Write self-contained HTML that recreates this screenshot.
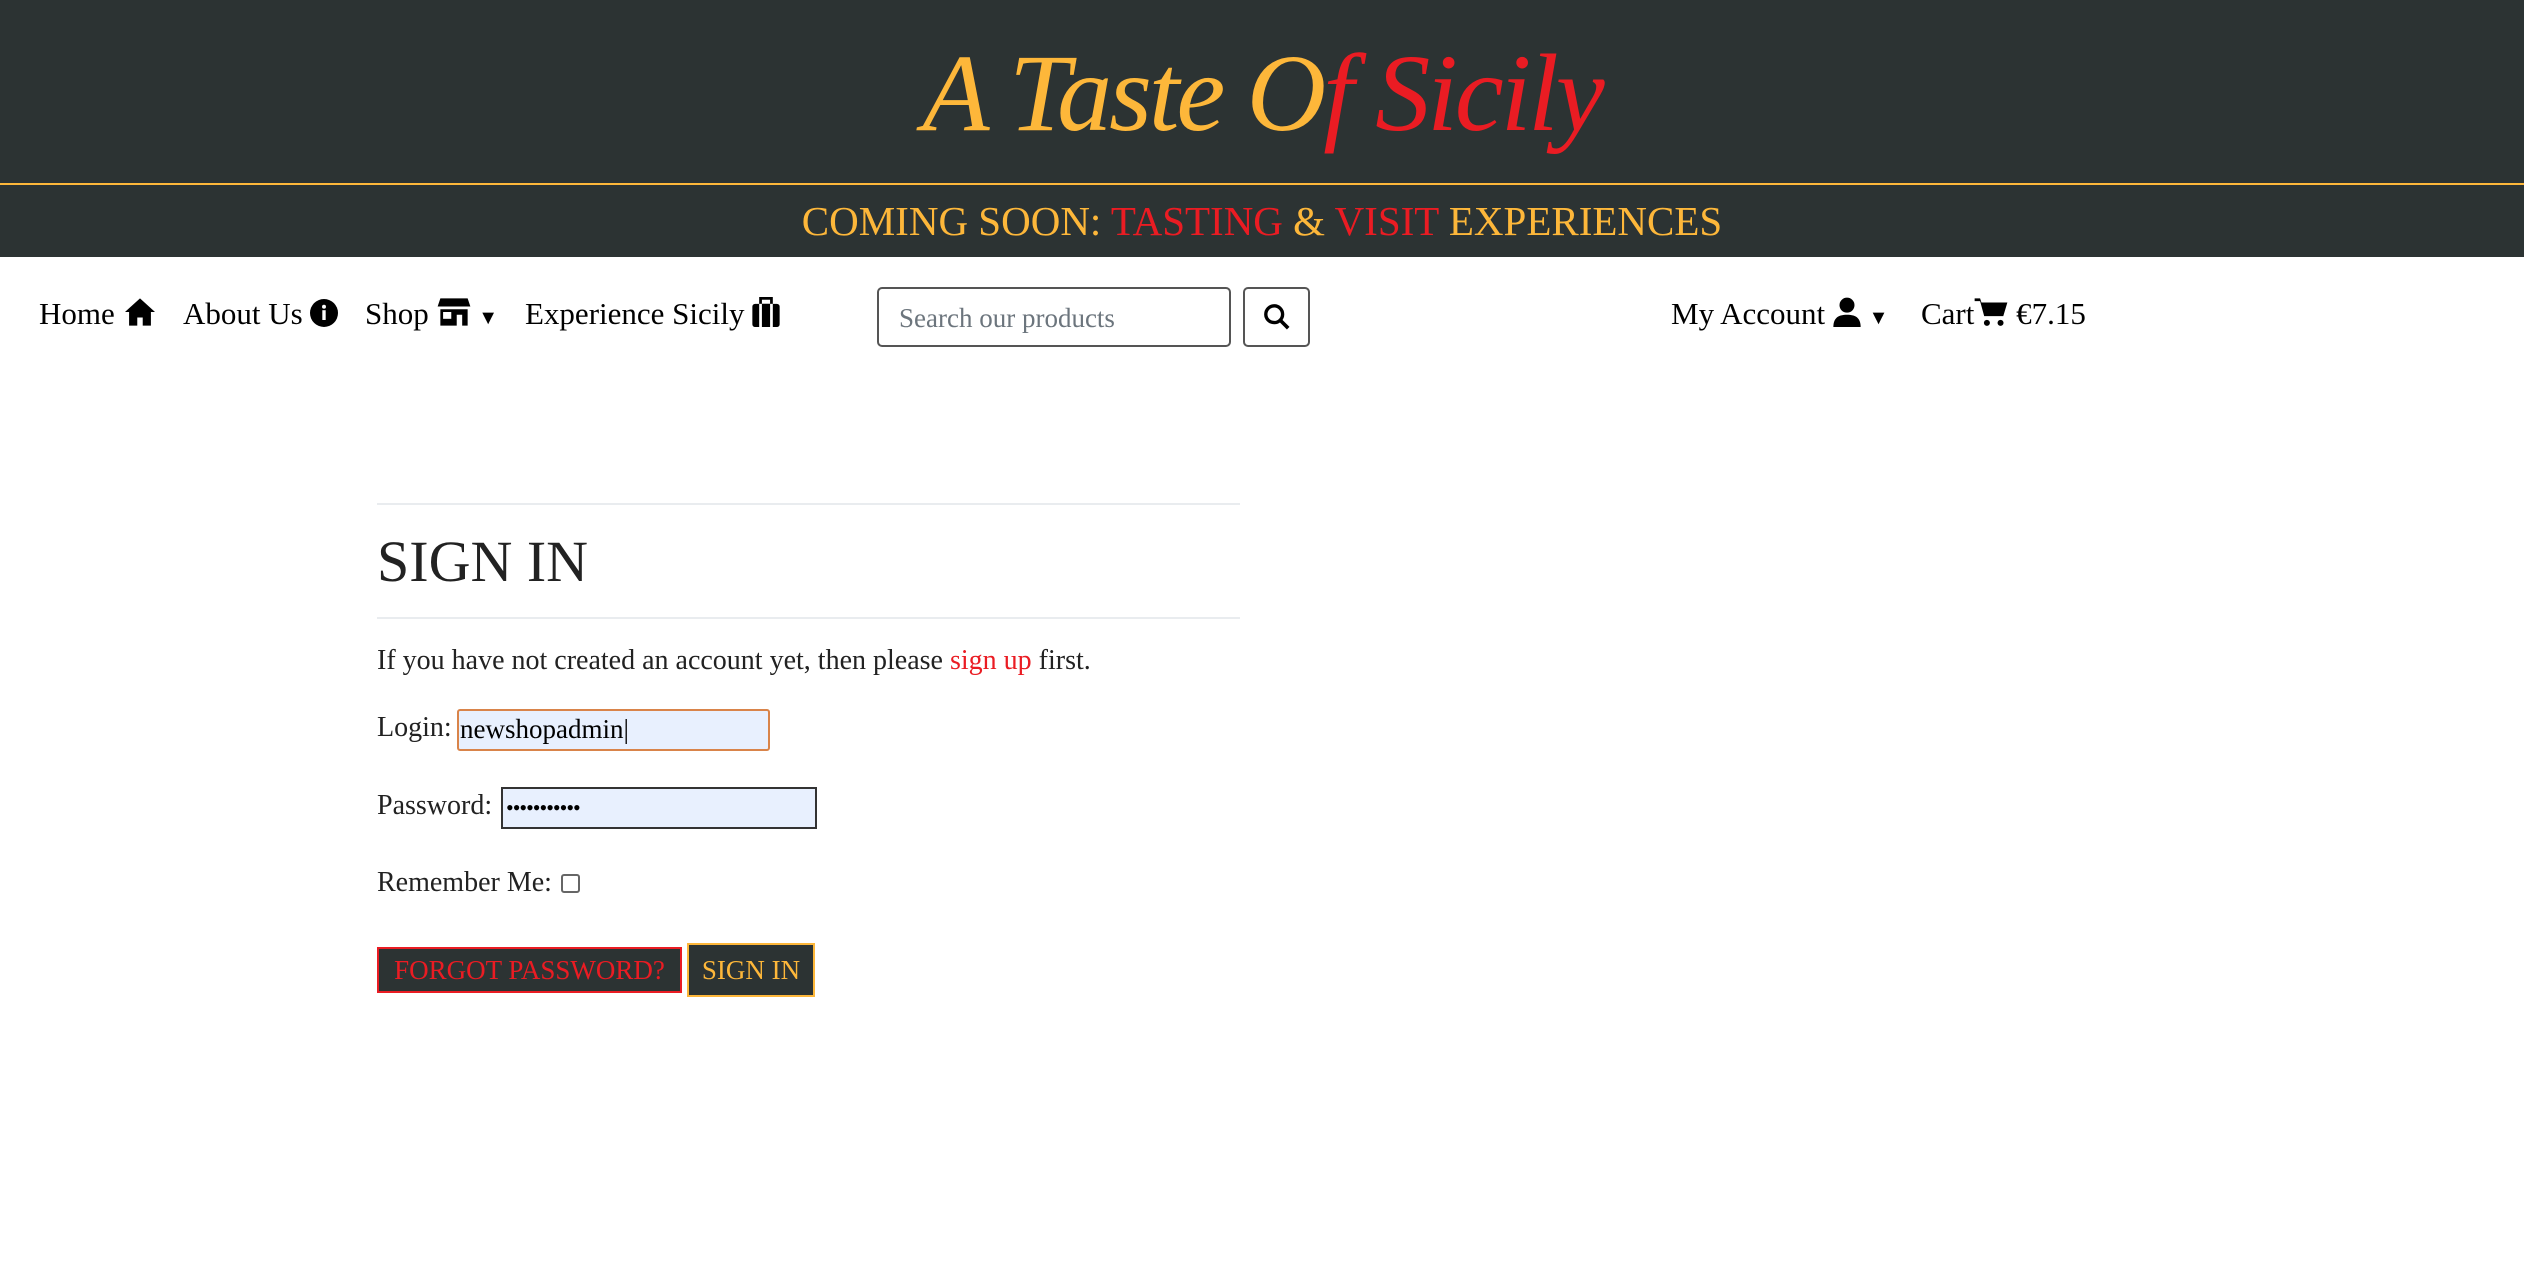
<!DOCTYPE html>
<html><head><meta charset="utf-8"><style>
*{box-sizing:border-box;margin:0;padding:0}
body{width:2524px;height:1288px;background:#fff;font-family:"Liberation Serif",serif;color:#212529;position:relative;overflow:hidden}
.hdr{position:absolute;left:0;top:0;width:2524px;height:184px;background:#2c3333}
.title{position:absolute;left:0;width:2524px;top:30px;text-align:center;font-size:110px;font-style:italic;font-family:"Liberation Serif",serif;color:#fdb73a;letter-spacing:-3px}
.red{color:#ea1c23}
.line{position:absolute;left:0;top:183px;width:2524px;height:2px;background:#fdb73a}
.ban{position:absolute;left:0;top:185px;width:2524px;height:72px;background:#2c3333;text-align:center;font-size:41px;line-height:72px;color:#fdb73a}
.nav{position:absolute;top:296px;font-size:31px;color:#000;white-space:nowrap}
.search{position:absolute;left:877px;top:287px;width:354px;height:60px;border:2px solid #555;border-radius:5px;font-size:27px;color:#6c757d;padding:14px 20px}
.sbtn{position:absolute;left:1243px;top:287px;width:67px;height:60px;border:2px solid #555;border-radius:5px}
.hr{position:absolute;left:377px;width:863px;height:2px;background:#e9ecef}
.h{position:absolute;left:377px;top:528px;font-size:58px;color:#222}
.t{position:absolute;left:377px;font-size:28px;color:#222;white-space:nowrap}
.inp{position:absolute;background:#e8f0fe;font-size:27px;color:#000}
.btn{position:absolute;background:#2c3333;font-size:27px;text-align:center}
</style></head><body>
<div class="hdr"></div>
<div class="title">A Taste O<span class="red">f Sicily</span></div>
<div class="line"></div>
<div class="ban">COMING SOON: <span class="red">TASTING</span> &amp; <span class="red">VISIT</span> EXPERIENCES</div>

<div class="nav" style="left:39px">Home <svg width="34" height="30" viewBox="0 0 24 22" style="vertical-align:-3px"><path d="M12 1L1 11h3v10h6v-6h4v6h6V11h3z" fill="#000"/></svg></div>
<div class="nav" style="left:183px">About Us <svg width="28" height="28" viewBox="0 0 20 20" style="vertical-align:-3px"><circle cx="10" cy="10" r="10" fill="#000"/><rect x="8.8" y="8" width="2.4" height="7" fill="#fff"/><circle cx="10" cy="5.5" r="1.4" fill="#fff"/></svg></div>
<div class="nav" style="left:365px">Shop <svg width="34" height="30" viewBox="0 0 24 22" style="vertical-align:-3px"><path d="M2 1h20l2 6H0z" fill="#000"/><path d="M2 9h20v12h-4v-8h-4v8H2z" fill="#000"/><rect x="4" y="11" width="6" height="5" fill="#fff"/></svg> <span style="font-size:20px">▼</span></div>
<div class="nav" style="left:525px">Experience Sicily <svg width="28" height="30" viewBox="0 0 20 22" style="vertical-align:-3px"><rect x="0" y="5" width="20" height="17" rx="2" fill="#000"/><rect x="6" y="1" width="8" height="5" fill="none" stroke="#000" stroke-width="2"/><rect x="5" y="5" width="2" height="17" fill="#fff"/><rect x="13" y="5" width="2" height="17" fill="#fff"/></svg></div>
<div class="search">Search our products</div>
<div class="sbtn"><svg width="28" height="28" viewBox="0 0 20 20" style="position:absolute;left:18px;top:14px"><circle cx="8" cy="8" r="6" fill="none" stroke="#000" stroke-width="2.4"/><path d="M12.5 12.5L18 18" stroke="#000" stroke-width="2.6"/></svg></div>
<div class="nav" style="left:1671px">My Account <svg width="28" height="30" viewBox="0 0 20 22" style="vertical-align:-3px"><circle cx="10" cy="6" r="5.5" fill="#000"/><path d="M0 22c0-7 4-9 10-9s10 2 10 9z" fill="#000"/></svg> <span style="font-size:20px">▼</span></div>
<div class="nav" style="left:1921px">Cart<svg width="34" height="30" viewBox="0 0 24 22" style="vertical-align:-3px"><path d="M0 1h4l1 3h19l-3 10H7L4 3H0z" fill="#000"/><circle cx="9" cy="19" r="2.2" fill="#000"/><circle cx="19" cy="19" r="2.2" fill="#000"/></svg> €7.15</div>

<div class="hr" style="top:503px"></div>
<div class="h">SIGN IN</div>
<div class="hr" style="top:617px"></div>
<div class="t" style="top:645px">If you have not created an account yet, then please <span class="red">sign up</span> first.</div>
<div class="t" style="top:712px">Login:</div>
<div class="inp" style="left:457px;top:709px;width:313px;height:42px;border:2px solid #d9844a;border-radius:3px;padding:3px 0 0 1px">newshopadmin|</div>
<div class="t" style="top:790px">Password:</div>
<div class="inp" style="left:501px;top:787px;width:316px;height:42px;border:2px solid #333;padding:6px 0 0 3px;font-size:22px;letter-spacing:-1px">•••••••••••</div>
<div class="t" style="top:867px">Remember Me:</div>
<div style="position:absolute;left:561px;top:874px;width:19px;height:19px;border:2px solid #666;border-radius:3px"></div>
<div class="btn" style="left:377px;top:947px;width:305px;height:46px;border:2px solid #ea1c23;color:#ea1c23;line-height:42px">FORGOT PASSWORD?</div>
<div class="btn" style="left:687px;top:943px;width:128px;height:54px;border:2px solid #fdb73a;color:#fdb73a;line-height:50px">SIGN IN</div>
</body></html>
